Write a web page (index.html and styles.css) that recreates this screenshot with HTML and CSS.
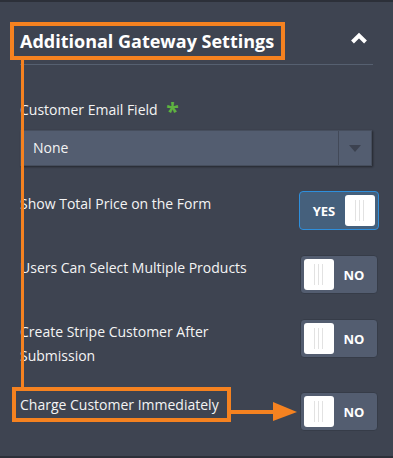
FILE: index.html
```html
<!DOCTYPE html>
<html lang="en">
<head>
  <meta charset="UTF-8">
  <meta name="viewport" content="width=device-width, initial-scale=1.0">
  <title>Additional Gateway Settings</title>
  <link rel="stylesheet" href="styles.css">
</head>
<body>
  <div class="panel">
    <div class="panel-head">
      <h2 class="panel-title">Additional Gateway Settings</h2>
      <svg class="chevron" width="18" height="12" viewBox="0 0 18 12">
        <polyline points="2.5,10 9,3.5 15.5,10" fill="none" stroke="#fff" stroke-width="4"/>
      </svg>
    </div>

    <div class="panel-body">
      <div class="field">
        <label class="field-label">Customer Email Field <span class="req">*</span></label>
        <div class="select">
          <span class="select-value">None</span>
          <span class="select-btn"><span class="select-caret"></span></span>
        </div>
      </div>

      <div class="row">
        <span class="row-label">Show Total Price on the Form</span>
        <div class="toggle on">
          <span class="toggle-text">YES</span>
          <span class="knob"></span>
        </div>
      </div>

      <div class="row">
        <span class="row-label">Users Can Select Multiple Products</span>
        <div class="toggle">
          <span class="knob"></span>
          <span class="toggle-text">NO</span>
        </div>
      </div>

      <div class="row">
        <span class="row-label">Create Stripe Customer After Submission</span>
        <div class="toggle">
          <span class="knob"></span>
          <span class="toggle-text">NO</span>
        </div>
      </div>

      <div class="row">
        <span class="row-label"><span class="mark">Charge Customer Immediately</span></span>
        <div class="toggle">
          <span class="knob"></span>
          <span class="toggle-text">NO</span>
        </div>
      </div>
    </div>

    <!-- annotation: guide line + arrow -->
    <span class="guide-line"></span>
    <svg class="guide-arrow" width="68" height="24" viewBox="0 0 68 24">
      <rect x="0" y="10" width="46" height="4" fill="#f58220"/>
      <polygon points="43,2 67,12 43,21" fill="#f58220"/>
    </svg>
  </div>
</body>
</html>
```

FILE: styles.css
```css
body {
    margin: 0;
    background: #3e4451;
    font-family: "Open Sans", "Noto Sans", sans-serif;
    color: #f4f4f4;
}

.panel {
    position: relative;
    height: 454px;
    border-top: 2px solid #2c3039;
    border-bottom: 2px solid #2c3039;
    padding: 0 15px 0 20px;
}

.panel-head {
    display: flex;
    align-items: center;
    justify-content: space-between;
    padding: 20px 0 4px;
    margin-right: 5px;
    border-bottom: 1px solid #566070;
}

.panel-title {
    margin: 0 0 0 -10px;
    padding: 2px 7px 2px 6px;
    border: 4px solid #f58220;
    font-size: 18px;
    font-weight: 700;
    line-height: 26px;
    color: #fff;
}

.chevron {
    margin-right: 5px;
    margin-top: -6px;
}

.panel-body {
    padding-top: 33px;
}

.field {
    margin-bottom: 25px;
    margin-right: 6px;
}

.field-label {
    display: block;
    font-size: 14px;
    line-height: 24px;
    margin-bottom: 8px;
}

.req {
    color: #5fb340;
    font-size: 23px;
    font-weight: 700;
    margin-left: 5px;
    vertical-align: -5px;
    line-height: 10px;
}

.select {
    display: flex;
    height: 36px;
    box-sizing: border-box;
    background: #535d70;
    border: 1px solid #464e5d;
    box-shadow: 1px 1px 2px rgba(0, 0, 0, 0.45);
}

.select-value {
    flex: 1;
    padding-left: 12px;
    font-size: 14px;
    line-height: 34px;
}

.select-btn {
    width: 32px;
    border-left: 1px solid #424958;
    display: flex;
    align-items: center;
    justify-content: center;
}

.select-caret {
    width: 0;
    height: 0;
    border-left: 6px solid transparent;
    border-right: 6px solid transparent;
    border-top: 7px solid #3c4250;
}

.row {
    display: flex;
    justify-content: space-between;
    align-items: flex-start;
    min-height: 40px;
    margin-bottom: 24px;
}

.row-label {
    max-width: 240px;
    padding-top: 1px;
    font-size: 14px;
    line-height: 24px;
}

.mark {
    display: inline-block;
    margin: -6px 0 0 -8px;
    padding: 2px 8px 1px 4px;
    border: 4px solid #f58220;
}

.toggle {
    display: flex;
    align-items: center;
    justify-content: space-between;
    width: 78px;
    height: 39px;
    box-sizing: border-box;
    padding: 3px;
    border: 1px solid #363c48;
    border-radius: 4px;
    background: #535d70;
}

.toggle.on {
    width: 80px;
    margin-right: -1px;
    background: #45607c;
    border-color: #2e8fdc;
}

.toggle-text {
    flex: 1;
    text-align: center;
    font-size: 13px;
    font-weight: 700;
    color: #fff;
}

.knob {
    width: 30px;
    height: 31px;
    border-radius: 3px;
    background: #fff linear-gradient(90deg,
        transparent 10px, #e2e2e2 10px, #e2e2e2 11px,
        transparent 11px, transparent 14px, #e2e2e2 14px, #e2e2e2 15px,
        transparent 15px, transparent 18px, #e2e2e2 18px, #e2e2e2 19px,
        transparent 19px) no-repeat center / 30px 21px;
}

.guide-line {
    position: absolute;
    left: 21px;
    top: 58px;
    width: 3px;
    height: 329px;
    background: #f58220;
}

.guide-arrow {
    position: absolute;
    left: 230px;
    top: 398px;
}
```
